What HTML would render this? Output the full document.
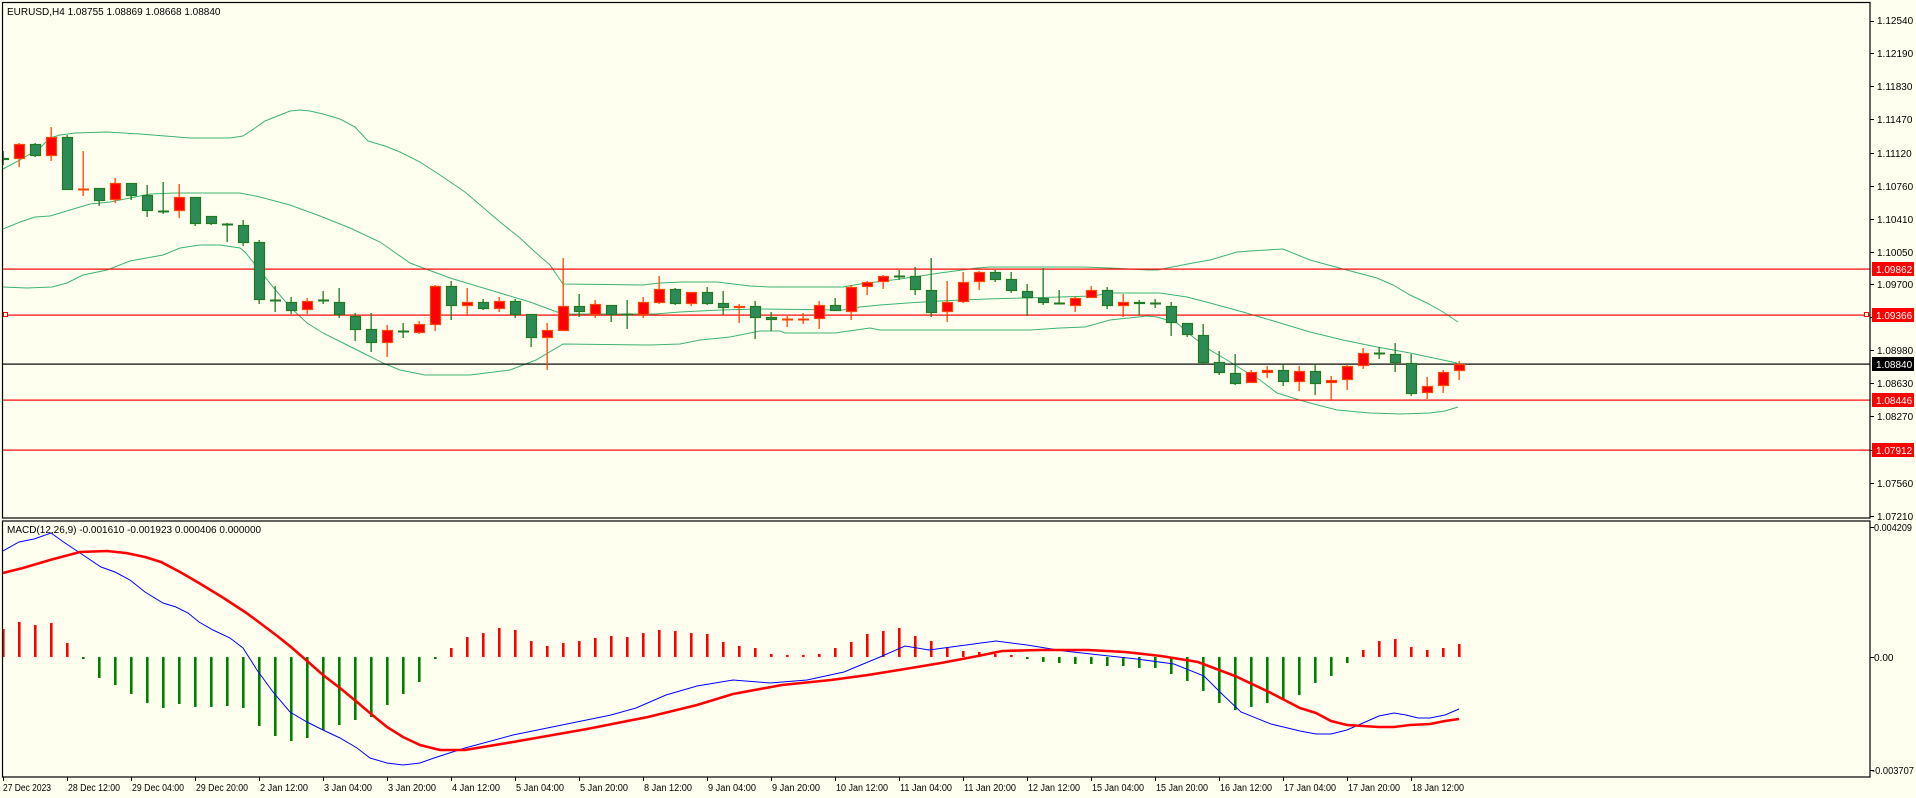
<!DOCTYPE html>
<html><head><meta charset="utf-8"><style>
html,body{margin:0;padding:0;background:#fffff0;}
svg{display:block;font-family:"Liberation Sans",sans-serif;font-size:10px;}
</style></head><body>
<svg id="s" width="1916" height="798" viewBox="0 0 1916 798" xmlns="http://www.w3.org/2000/svg">
<rect width="1916" height="798" fill="#fffff0"/>
<g id="g"></g>
<g fill="#000">
<text x="7" y="15">EURUSD,H4  1.08755 1.08869 1.08668 1.08840</text>
<text x="7" y="533">MACD(12,26,9) -0.001610 -0.001923 0.000406 0.000000</text>
<text x="1877" y="24">1.12540</text>
<text x="1877" y="57">1.12190</text>
<text x="1877" y="90">1.11830</text>
<text x="1877" y="123">1.11470</text>
<text x="1877" y="157">1.11120</text>
<text x="1877" y="190">1.10760</text>
<text x="1877" y="223">1.10410</text>
<text x="1877" y="256">1.10050</text>
<text x="1877" y="288">1.09700</text>
<text x="1877" y="354">1.08980</text>
<text x="1877" y="387">1.08630</text>
<text x="1877" y="420">1.08270</text>
<text x="1877" y="487">1.07560</text>
<text x="1877" y="520">1.07210</text>
<text x="1874" y="531" textLength="38" lengthAdjust="spacingAndGlyphs">0.004209</text>
<text x="1874" y="661">0.00</text>
<text x="1872" y="774" textLength="42" lengthAdjust="spacingAndGlyphs">-0.003707</text>
</g>
<g fill="#ff0000"><rect x="1872" y="262" width="42" height="14"/><rect x="1872" y="308" width="42" height="14"/><rect x="1872" y="393" width="42" height="14"/><rect x="1872" y="443" width="42" height="14"/></g>
<rect x="1872" y="357" width="42" height="14" fill="#000"/>
<g fill="#fff">
<text x="1876" y="273">1.09862</text>
<text x="1876" y="319">1.09366</text>
<text x="1876" y="368">1.08840</text>
<text x="1876" y="404">1.08446</text>
<text x="1876" y="454">1.07912</text>
</g>
<g id="dates" fill="#000"></g>
</svg>
<script>
var C=[["G",158,160,151,165],["R",144,159,143,167],["G",144,156,143,157],["R",137,156,127,161],["G",137,190,135,190],["R",189,190,151,196],["G",188,201,188,206],["R",183,200,178,203],["G",183,196,183,200],["G",195,211,185,217],["G",211,212,182,214],["R",197,211,184,218],["G",197,224,197,226],["G",216,224,216,225],["G",224,225,223,242],["G",225,243,220,246],["G",242,300,240,304],["G",300,301,286,312],["G",302,311,297,314],["R",301,310,298,314],["G",300,301,291,304],["G",302,315,288,318],["G",316,330,313,341],["G",329,343,313,352],["R",330,343,325,357],["G",331,332,323,338],["R",324,333,321,334],["R",286,325,285,331],["G",286,306,281,320],["R",302,306,288,315],["G",302,309,299,310],["R",301,309,297,312],["G",301,315,299,318],["G",314,338,314,347],["R",330,338,323,370],["R",306,331,258,331],["G",306,312,294,317],["R",304,315,300,318],["G",305,315,305,322],["G",314,315,300,329],["R",302,315,297,318],["R",289,303,276,304],["G",289,304,288,305],["R",292,304,292,306],["G",292,304,287,305],["G",303,308,291,315],["R",306,308,304,323],["G",306,318,301,339],["G",317,320,312,331],["R",319,320,316,327],["R",319,320,313,324],["R",305,319,301,329],["G",305,311,298,311],["R",287,312,285,320],["R",282,287,281,295],["R",276,282,275,289],["G",276,277,270,280],["G",276,290,267,295],["G",290,313,258,317],["R",302,312,281,322],["R",282,302,272,303],["R",272,282,271,290],["G",272,280,270,282],["G",279,291,272,293],["G",291,298,284,316],["G",298,303,268,305],["G",303,304,290,304],["R",298,306,297,312],["R",290,298,286,298],["G",290,306,287,309],["R",302,306,294,317],["G",302,304,300,315],["G",303,304,299,308],["G",306,323,302,336],["G",323,335,323,337],["G",335,363,324,364],["G",362,373,351,375],["G",373,384,354,385],["R",372,383,370,383],["R",370,373,366,378],["G",370,382,364,386],["R",371,382,366,391],["G",371,384,364,395],["R",380,383,376,401],["R",366,380,365,390],["R",353,366,348,369],["G",353,354,347,359],["G",354,363,343,372],["G",363,394,354,396],["R",386,393,377,399],["R",372,386,370,393],["R",364,371,361,380]];
var H=[629,622,625,623,643,659,678,685,694,703,708,704,707,707,706,708,726,736,741,738,730,725,720,717,705,694,682,659,648,637,633,628,630,641,646,643,641,638,636,637,633,630,631,633,634,642,646,648,654,655,655,654,648,642,634,631,628,636,641,648,651,652,654,655,659,662,663,664,664,666,666,668,668,674,681,691,703,710,707,703,700,695,683,676,663,650,641,639,647,650,648,644];
var UP=[[3,169],[20,160],[40,148],[50,138],[60,135],[75,133],[107,132],[140,134],[190,138],[230,138],[243,136],[255,128],[265,121],[280,115],[290,111],[300,110],[310,111],[323,114],[340,119],[355,127],[368,141],[385,146],[400,152],[420,162],[440,175],[465,192],[486,210],[500,222],[520,238],[535,252],[550,265],[563,284],[643,285],[660,283],[683,282],[717,282],[750,286],[770,287],[843,287],[860,284],[900,279],[940,273],[977,268],[990,267],[1083,267],[1110,268],[1148,270],[1158,270],[1167,268],[1193,263],[1210,260],[1237,252],[1250,251],[1283,249],[1310,260],[1343,269],[1377,278],[1393,285],[1410,295],[1427,303],[1443,312],[1458,322]];
var MID=[[3,229],[20,222],[35,217],[50,216],[70,210],[90,204],[110,202],[130,198],[150,194],[175,193],[240,193],[260,197],[290,205],[320,216],[350,228],[380,242],[410,263],[450,278],[490,290],[530,302],[557,312],[570,314],[655,314],[680,312],[720,310],[760,309],[843,310],[860,307],[880,305],[907,303],[940,301],[987,299],[1060,297],[1093,296],[1110,293],[1160,293],[1187,297],[1210,303],[1243,312],[1277,322],[1310,332],[1343,340],[1377,347],[1410,353],[1443,360],[1457,363]];
var LO=[[3,287],[27,288],[52,287],[67,283],[83,275],[107,270],[130,261],[163,255],[180,248],[200,245],[220,245],[240,248],[245,252],[257,267],[273,287],[290,307],[307,323],[323,333],[343,343],[363,353],[383,363],[400,370],[425,375],[470,375],[510,370],[536,360],[563,344],[650,345],[680,344],[700,340],[730,337],[760,331],[780,331],[785,333],[835,333],[870,328],[880,330],[945,330],[990,330],[1030,330],[1060,328],[1085,327],[1110,320],[1147,316],[1157,317],[1177,323],[1193,337],[1210,350],[1227,360],[1243,370],[1260,380],[1277,393],[1293,398],[1310,403],[1337,410],[1370,413],[1400,414],[1430,413],[1445,411],[1458,407]];
var BL=[[3,551],[19,542],[34,539],[51,533],[65,543],[80,553],[101,567],[115,572],[130,580],[145,592],[163,603],[176,607],[188,613],[199,622],[213,630],[230,638],[243,648],[257,670],[273,692],[290,712],[307,722],[323,730],[340,738],[357,748],[370,758],[387,763],[403,765],[420,763],[434,758],[465,748],[513,735],[562,725],[611,715],[636,708],[666,695],[697,686],[733,680],[770,683],[807,680],[844,672],[880,657],[905,646],[929,650],[966,645],[996,641],[1027,645],[1064,651],[1100,655],[1137,659],[1174,664],[1204,676],[1223,695],[1241,712],[1271,724],[1300,731],[1316,734],[1331,734],[1347,730],[1363,723],[1379,716],[1394,713],[1406,715],[1418,718],[1430,718],[1445,715],[1459,709]];
var RL=[[3,573],[23,568],[50,560],[80,552],[107,551],[126,553],[145,557],[161,562],[180,572],[199,583],[222,597],[245,612],[256,620],[276,635],[291,647],[306,660],[323,675],[340,688],[357,702],[370,713],[387,727],[403,737],[420,745],[440,750],[465,750],[513,742],[587,729],[648,717],[697,705],[733,694],[782,685],[831,680],[868,675],[905,669],[941,663],[978,656],[1002,651],[1039,650],[1088,650],[1125,652],[1161,656],[1198,662],[1235,676],[1271,693],[1300,708],[1316,713],[1331,721],[1347,725],[1379,727],[1394,727],[1410,725],[1430,724],[1445,721],[1459,719]];
function pl(a,c,w){return '<polyline fill="none" stroke="'+c+'" stroke-width="'+w+'" points="'+a.map(function(p){return p.join(',')}).join(' ')+'"/>';}
var s='';
s+='<clipPath id="cm"><rect x="3" y="3" width="1867" height="514"/></clipPath><clipPath id="cd"><rect x="3" y="522" width="1867" height="254"/></clipPath>';
s+='<g clip-path="url(#cm)">';
s+=pl(UP,'#3cb371',1)+pl(MID,'#3cb371',1)+pl(LO,'#3cb371',1);
[[269,'#ff0000'],[315,'#ff0000'],[400,'#ff0000'],[450,'#ff0000'],[364,'#000']].forEach(function(l){s+='<rect x="3" y="'+(l[0]-0.5)+'" width="1867" height="1.2" fill="'+l[1]+'"/>';});
s+='<rect x="3.5" y="312.5" width="4" height="4" fill="#fffff0" stroke="#ff0000"/><rect x="1864.5" y="312.5" width="4" height="4" fill="#fffff0" stroke="#ff0000"/>';
C.forEach(function(c,i){var x=3+16*i;var g=c[0]=='G';var wc=g?'#1f7a1f':'#ff4500';var fc=g?'#2e8b57':'#ff0000';
s+='<rect x="'+(x-0.5)+'" y="'+c[3]+'" width="1.3" height="'+(c[4]-c[3])+'" fill="'+wc+'"/>';
var h=c[2]-c[1];if(h<2){s+='<rect x="'+(x-5)+'" y="'+(c[1]-0.5)+'" width="11" height="2" fill="'+wc+'"/>';}
else s+='<rect x="'+(x-4.5)+'" y="'+(c[1]+0.5)+'" width="10" height="'+(h-1)+'" fill="'+fc+'" stroke="'+wc+'" stroke-width="1.2"/>';});
s+='</g><g clip-path="url(#cd)">';
H.forEach(function(v,i){var x=3+16*i-1;
if(v<=657) s+='<rect x="'+x+'" y="'+v+'" width="2.6" height="'+(657-v)+'" fill="#ff0000"/>';
else s+='<rect x="'+x+'" y="657" width="2.6" height="'+(v-657)+'" fill="#008000"/>';});
s+=pl(BL,'#0000ff',1)+pl(RL,'#ff0000',2.6);
s+='</g>';
s+='<g fill="none" stroke="#000" stroke-width="1.2"><rect x="2.5" y="2.5" width="1867.5" height="515.5"/><rect x="2.5" y="521" width="1867.5" height="256"/></g>';
var yt=[21,53,86,119,153,186,219,252,284,317,350,383,416,450,483,516];
yt.forEach(function(y){s+='<rect x="1870" y="'+y+'" width="4" height="1" fill="#000"/>';});
s+='<rect x="1870" y="657" width="4" height="1" fill="#000"/><rect x="1870" y="527" width="4" height="1" fill="#000"/><rect x="1870" y="770" width="4" height="1" fill="#000"/>';
for(var k=0;k<23;k++){s+='<rect x="'+(3+64*k)+'" y="777" width="1" height="4" fill="#000"/>';}
document.getElementById('g').innerHTML=s;
var D=["27 Dec 2023","28 Dec 12:00","29 Dec 04:00","29 Dec 20:00","2 Jan 12:00","3 Jan 04:00","3 Jan 20:00","4 Jan 12:00","5 Jan 04:00","5 Jan 20:00","8 Jan 12:00","9 Jan 04:00","9 Jan 20:00","10 Jan 12:00","11 Jan 04:00","11 Jan 20:00","12 Jan 12:00","15 Jan 04:00","15 Jan 20:00","16 Jan 12:00","17 Jan 04:00","17 Jan 20:00","18 Jan 12:00"];
var t='';D.forEach(function(d,k){var w=d.length>=12?52:(d.length==11?48:44);t+='<text x="'+(3+64*k+(k?1:0))+'" y="791" textLength="'+w+'" lengthAdjust="spacingAndGlyphs">'+d+'</text>';});
document.getElementById('dates').innerHTML=t;
</script>
</body></html>
